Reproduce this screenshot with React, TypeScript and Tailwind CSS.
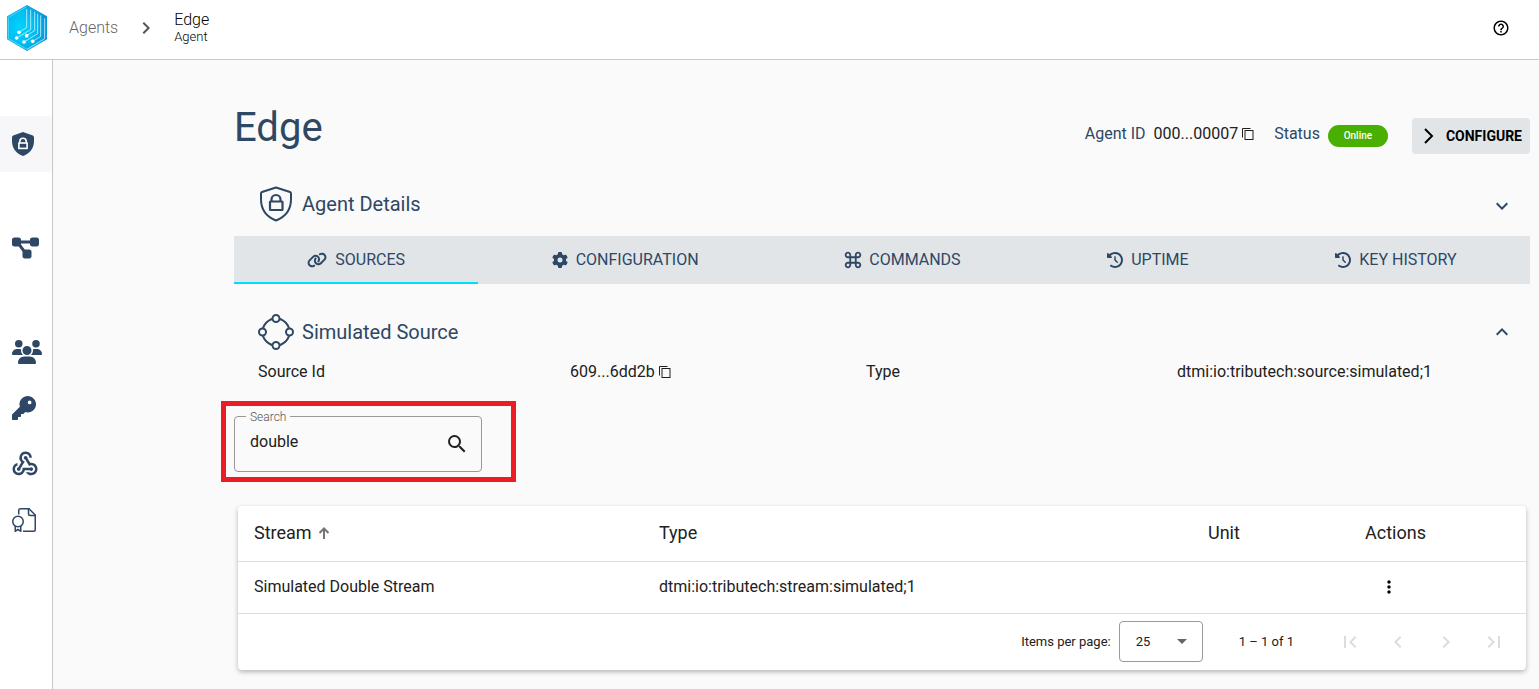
import React from "react";
import {
  MdChevronLeft,
  MdChevronRight,
  MdExpandLess,
  MdExpandMore,
  MdFirstPage,
  MdHelpOutline,
  MdKeyboardCommandKey,
  MdLastPage,
  MdMoreVert,
  MdSearch,
  MdWebhook,
} from "react-icons/md";
import {
  FaClockRotateLeft,
  FaDiagramProject,
  FaGear,
  FaKey,
  FaLink,
  FaUsers,
} from "react-icons/fa6";

const Logo = () => (
  <svg viewBox="0 0 120 138" className="w-10 h-[46px]" aria-hidden="true">
    <defs>
      <radialGradient id="logo" cx="0.35" cy="0.5" r="0.65">
        <stop offset="0" stopColor="#00d4ff" />
        <stop offset="0.5" stopColor="#00c0f3" />
        <stop offset="1" stopColor="#0a93d6" />
      </radialGradient>
    </defs>
    <path d="M60 0 L120 34 V103 L60 138 L0 103 V34 Z" fill="url(#logo)" />
    <g fill="none" stroke="#c4f0ff" strokeWidth="2.500">
      <path d="M60 133 L4 101 V37 L58 6" strokeWidth="2" stroke="#7fe0fb" />
      <path d="M36 82 L59 68 V12" />
      <path d="M29 99 L71 74 V14" />
      <path d="M59 92 L83 77 V20" />
      <path d="M51 111 L92 86 V26" />
      <path d="M77 109 L101 94 V31" />
      <path d="M60 133 L113 101 V40" />
    </g>
    <g fill="#fff">
      <circle cx="36" cy="82" r="5.500" />
      <circle cx="29" cy="99" r="5.500" />
      <circle cx="59" cy="92" r="5.500" />
      <circle cx="51" cy="111" r="5.500" />
      <circle cx="77" cy="109" r="5.500" />
    </g>
  </svg>
);

const ShieldSolid = () => (
  <svg viewBox="0 0 22 24" className="w-[22px] h-6" aria-hidden="true">
    <path
      d="M11 0 L20.8 3.6 Q22 4 22 5.4 V9 C22 16.500 17.500 21.500 11 24 C4.500 21.500 0 16.500 0 9 V5.400 Q0 4 1.200 3.600 Z"
      fill="currentColor"
    />
    <path d="M7.800 10.500 V9.500 A3.200 3.200 0 0 1 14.200 9.500 V10.500" fill="none" stroke="#fff" strokeWidth="1.600" />
    <rect x="6.900" y="11" width="8.200" height="5.400" fill="none" stroke="#fff" strokeWidth="1.600" />
  </svg>
);

const ShieldOutline = () => (
  <svg viewBox="0 0 36 36" className="w-9 h-9" fill="none" stroke="currentColor" aria-hidden="true">
    <path
      d="M18 1.500 L32 6 Q33 6.400 33 7.500 V13 C33 24 27 31 18 34.500 C9 31 3 24 3 13 V7.500 Q3 6.400 4 6 Z"
      strokeWidth="2"
      strokeLinejoin="round"
    />
    <path d="M13.500 15 V13.500 A4.500 4.500 0 0 1 22.500 13.500 V15" strokeWidth="2.200" />
    <rect x="12" y="15.500" width="12.500" height="8.500" rx="0.500" strokeWidth="2.200" />
  </svg>
);

const SourceIcon = () => (
  <svg viewBox="0 0 36 36" className="w-9 h-9" fill="none" stroke="currentColor" strokeWidth="2" aria-hidden="true">
    <circle cx="18" cy="18" r="13.500" />
    <g fill="#fafafa">
      <circle cx="18" cy="4.500" r="3.500" />
      <circle cx="31.500" cy="18" r="3.500" />
      <circle cx="18" cy="31.500" r="3.500" />
      <circle cx="4.500" cy="18" r="3.500" />
    </g>
  </svg>
);

const CertificateFile = () => (
  <svg viewBox="0 0 24 24" className="w-6 h-6" fill="none" stroke="currentColor" strokeWidth="1.500" aria-hidden="true">
    <path d="M6.750 6.500 V2.500 Q6.750 0.750 8.500 0.750 H17 L23.250 7 V21.500 Q23.250 23.250 21.500 23.250 H11" />
    <path d="M16.500 0.750 V6 Q16.500 7.500 18 7.500 H23.250" />
    <circle cx="6" cy="13.500" r="5.250" />
    <path d="M3.250 18 V23.250 L6 21.500 L8.750 23.250 V18" />
  </svg>
);

const SortArrow = () => (
  <svg viewBox="0 0 12 12" className="w-3 h-3" fill="none" stroke="#757575" strokeWidth="2" aria-hidden="true">
    <path d="M6 12 V1.500 M1.500 6 L6 1.500 L10.500 6" />
  </svg>
);

const tabs = [
  { label: "SOURCES", icon: <FaLink className="w-5 h-5" /> },
  { label: "CONFIGURATION", icon: <FaGear className="w-4 h-4" /> },
  { label: "COMMANDS", icon: <MdKeyboardCommandKey className="w-[22px] h-[22px] -m-[3px]" /> },
  { label: "UPTIME", icon: <FaClockRotateLeft className="w-4 h-4" /> },
  { label: "KEY HISTORY", icon: <FaClockRotateLeft className="w-4 h-4" /> },
];

const NavItem = ({ label, active, children }: { label: string; active?: boolean; children: React.ReactNode }) => (
  <a
    href="#"
    aria-label={label}
    className={
      active
        ? "flex items-center h-14 pl-3 rounded-r bg-[#f7f7f9]"
        : "flex items-center h-14 pl-3"
    }
  >
    {children}
  </a>
);

const CopyButton = () => (
  <button type="button" aria-label="Copy" className="text-[#1f1f1f]">
    <svg viewBox="0 0 12 12" className="w-3 h-3" fill="none" stroke="currentColor" aria-hidden="true">
      <path d="M0.500 9.500 V0.500 H8.500" />
      <rect x="3" y="2.500" width="8" height="9" />
    </svg>
  </button>
);

const PageButton = ({ label, children }: { label: string; children: React.ReactNode }) => (
  <button type="button" disabled aria-label={label} className="flex items-center justify-center w-12 h-12 text-[#dcdcdc]">
    {children}
  </button>
);

const App = () => {
  return (
    <div className="flex flex-col min-h-screen bg-[#fafafa] text-[#212121] font-['Roboto',sans-serif]">
      <header className="flex items-center h-[60px] pl-[7px] pr-[29px] pb-[3px] bg-white border-b border-[#c6c7c9]">
        <a href="#" aria-label="Home">
          <Logo />
        </a>
        <nav className="flex items-center ml-[22px]" aria-label="Breadcrumb">
          <a href="#" className="font-light text-[#666]">
            Agents
          </a>
          <MdChevronRight className="w-6 h-6 mx-4 text-[#555]" />
          <div className="font-light text-black">
            <div className="leading-[18px]">Edge</div>
            <div className="text-[13px] leading-4">Agent</div>
          </div>
        </nav>
        <button type="button" aria-label="Help" className="ml-auto text-black">
          <MdHelpOutline className="w-[18px] h-[18px]" />
        </button>
      </header>

      <div className="flex flex-1">
        <aside className="flex flex-col w-[53px] shrink-0 pt-14 bg-white border-r border-[#c6c7c9] text-[#2e4764]">
          <NavItem label="Agents" active>
            <ShieldSolid />
          </NavItem>
          <div className="my-12">
            <NavItem label="Twins">
              <FaDiagramProject className="w-[27px] h-6" />
            </NavItem>
          </div>
          <NavItem label="Users">
            <FaUsers className="w-[30px] h-6" />
          </NavItem>
          <NavItem label="Keys">
            <FaKey className="w-6 h-6" />
          </NavItem>
          <NavItem label="Webhooks">
            <MdWebhook className="w-[30px] h-[30px] -ml-[2px]" />
          </NavItem>
          <NavItem label="Certificates">
            <CertificateFile />
          </NavItem>
        </aside>

        <main className="flex-1 min-w-0 pt-11 pb-5 pl-[181px] pr-[9px]">
          {/* Title */}
          <div className="flex items-center h-16 text-[#2e4764]">
            <h1 className="pb-4 text-[40px] leading-[48px]">Edge</h1>
            <div className="flex items-center ml-auto">
              <div className="flex items-center pb-1">
                <span>Agent ID</span>
                <span className="ml-2 mr-1 text-[#212121]">000...00007</span>
                <CopyButton />
                <span className="ml-5">Status</span>
              </div>
              <span className="w-[60px] ml-2 rounded-full bg-[#49af00] text-center text-[10px] leading-[22px] font-medium text-white">
                Online
              </span>
              <button
                type="button"
                className="flex items-center h-9 ml-6 pl-3 pr-2 rounded-sm bg-[#e1e5e8] text-sm font-bold text-black"
              >
                <svg viewBox="0 0 10 16" className="w-[10px] h-4 mr-3" fill="none" stroke="currentColor" strokeWidth="2" aria-hidden="true">
                  <path d="M1 1 L8 8 L1 15" />
                </svg>
                CONFIGURE
              </button>
            </div>
          </div>

          <button type="button" className="flex items-center w-full h-16 mt-1 pl-6 pr-4 text-xl text-[#2e4764]">
            <ShieldOutline />
            <span className="ml-2">Agent Details</span>
            <MdExpandMore className="w-6 h-6 mt-1 ml-auto" />
          </button>

          <div role="tablist" className="flex h-12 bg-[#e1e5e8] text-[#2e4764]">
            {tabs.map(({ label, icon }, i) => (
              <button
                key={label}
                type="button"
                role="tab"
                aria-selected={i === 0}
                className={
                  i === 0
                    ? "flex flex-auto items-center justify-center gap-2 shadow-[inset_0_-2px_0_#00dcff]"
                    : "flex flex-auto items-center justify-center gap-2"
                }
              >
                {icon}
                {label}
              </button>
            ))}
          </div>

          {/* Source */}
          <button type="button" className="flex items-center w-full h-12 mt-6 pl-6 pr-4 text-xl text-[#2e4764]">
            <SourceIcon />
            <span className="ml-2">Simulated Source</span>
            <MdExpandLess className="w-6 h-6 ml-auto" />
          </button>
          <div className="grid grid-cols-[312fr_296fr_311fr_329fr] h-8 px-6 items-center">
            <span>Source Id</span>
            <span className="flex items-center gap-1">
              609...6dd2b <CopyButton />
            </span>
            <span>Type</span>
            <span>dtmi:io:tributech:source:simulated;1</span>
          </div>

          <div className="w-[295px] mt-[13px] -ml-[13px] pt-[10px] pr-[29px] pb-[5px] pl-2 border-[5px] border-[#ed1c24]">
            <div className="relative flex items-center h-14 pl-[15px] pr-3 border border-[#999] rounded">
              <label htmlFor="search" className="absolute -top-2 left-[11px] px-1 bg-[#fafafa] text-xs font-light text-[#555]">
                Search
              </label>
              <input
                id="search"
                type="text"
                defaultValue="double"
                className="flex-1 min-w-0 pb-1 bg-transparent outline-none"
              />
              <button type="button" aria-label="Search streams">
                <MdSearch className="w-6 h-6" />
              </button>
            </div>
          </div>

          {/* Streams */}
          <section className="mt-6 mx-1 rounded bg-white shadow-[0_2px_5px_rgba(0,0,0,0.28)]">
            <table className="w-full table-fixed text-left">
              <thead className="text-lg">
                <tr className="h-[55px] border-b border-[#dedede]">
                  <th className="w-[421px] pl-4 font-normal" aria-sort="ascending">
                    <button type="button" className="flex items-center gap-[6px]">
                      Stream
                      <SortArrow />
                    </button>
                  </th>
                  <th className="font-normal">Type</th>
                  <th className="w-[157px] font-normal">Unit</th>
                  <th className="w-[161px] font-normal">Actions</th>
                </tr>
              </thead>
              <tbody>
                <tr className="h-[52px] border-b border-[#dedede]">
                  <td className="pl-4">Simulated Double Stream</td>
                  <td>dtmi:io:tributech:stream:simulated;1</td>
                  <td></td>
                  <td>
                    <button type="button" aria-label="More actions" className="flex justify-center w-12 text-black">
                      <MdMoreVert className="w-5 h-5" />
                    </button>
                  </td>
                </tr>
              </tbody>
            </table>
            <div className="flex items-center justify-end h-14 pr-2 text-[13px]">
              <label htmlFor="page-size">Items per page:</label>
              <div className="relative ml-2 mr-9">
                <select
                  id="page-size"
                  defaultValue="25"
                  className="block w-[84px] h-[41px] pl-4 border border-[#9a9a9a] rounded appearance-none bg-white"
                >
                  <option>10</option>
                  <option>25</option>
                  <option>50</option>
                </select>
                <svg viewBox="0 0 10 5" className="absolute top-[18px] right-4 w-[10px] h-[5px] pointer-events-none" aria-hidden="true">
                  <path d="M0 0 H10 L5 5 Z" fill="#666" />
                </svg>
              </div>
              <span className="mr-8">1 – 1 of 1</span>
              <PageButton label="First page">
                <MdFirstPage className="w-6 h-6" />
              </PageButton>
              <PageButton label="Previous page">
                <MdChevronLeft className="w-6 h-6" />
              </PageButton>
              <PageButton label="Next page">
                <MdChevronRight className="w-6 h-6" />
              </PageButton>
              <PageButton label="Last page">
                <MdLastPage className="w-6 h-6" />
              </PageButton>
            </div>
          </section>
        </main>
      </div>
    </div>
  );
};

export default App;
